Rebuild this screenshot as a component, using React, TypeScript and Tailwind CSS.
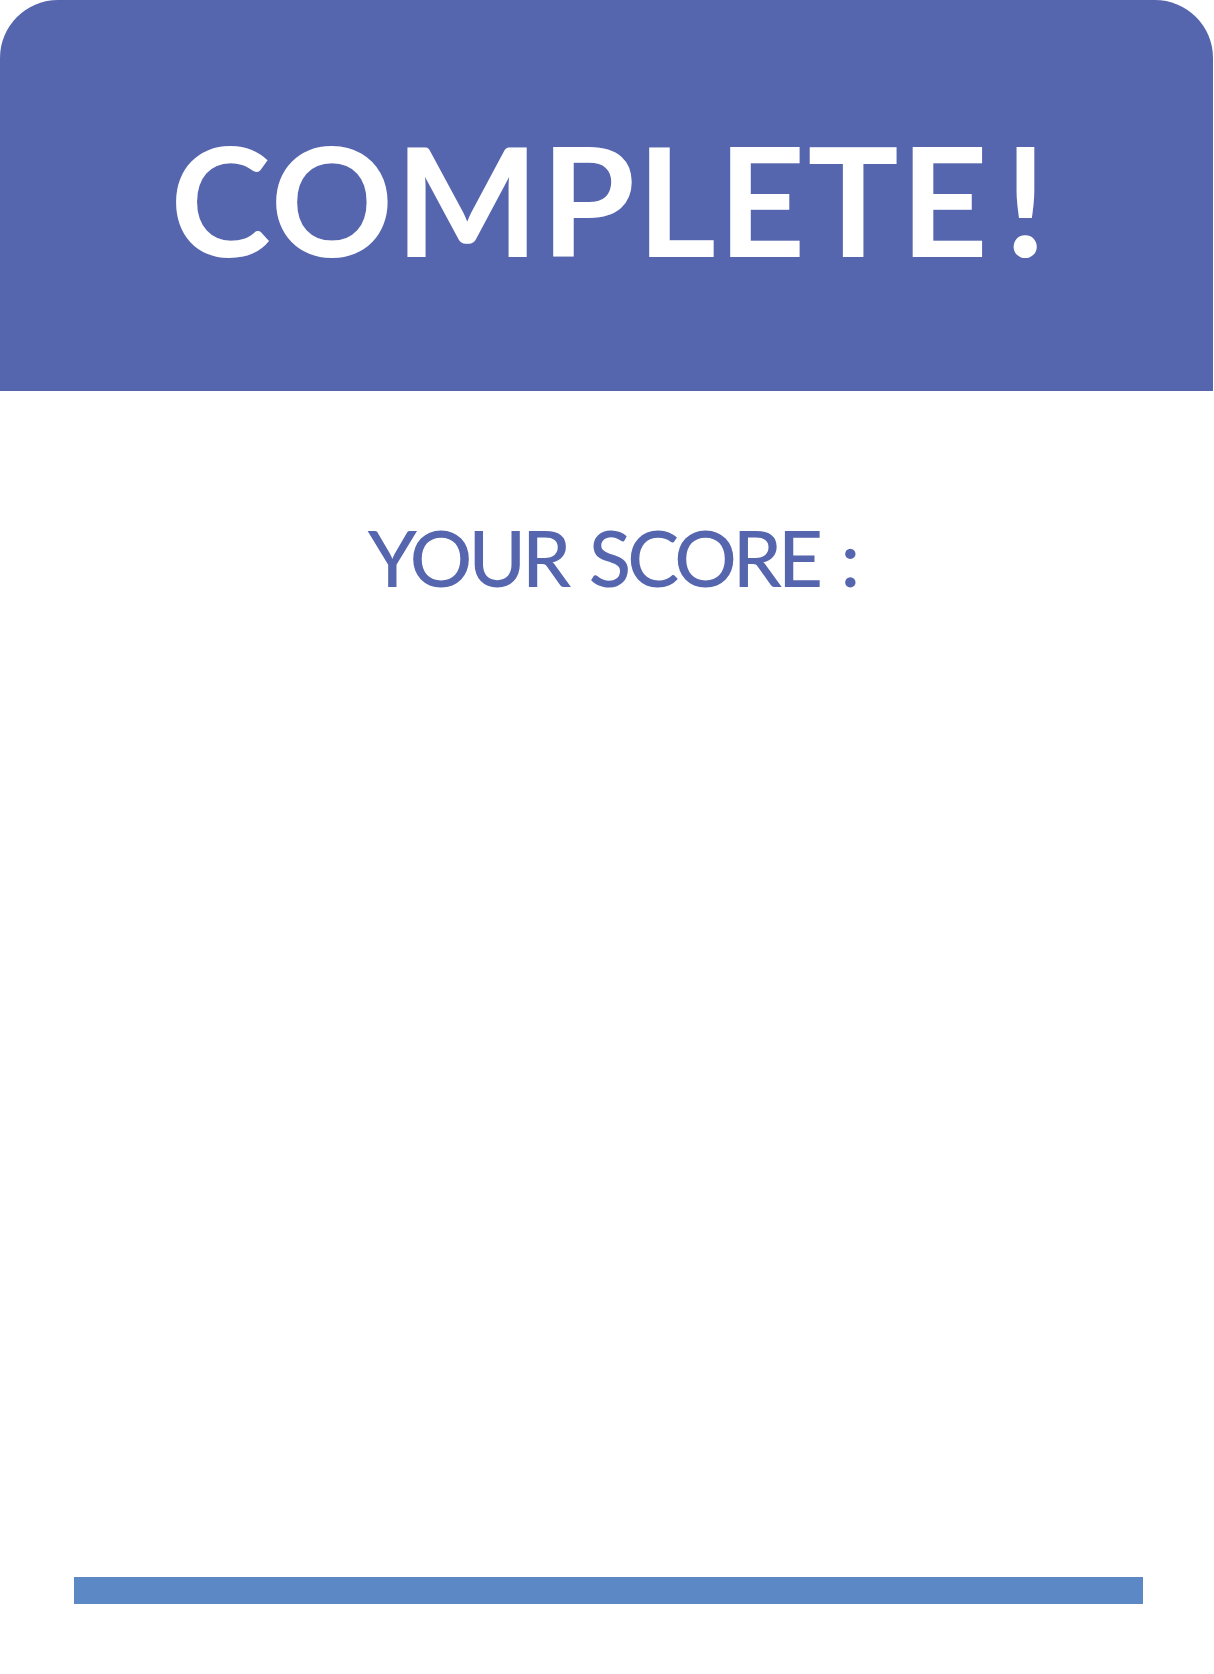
export default function App() {
  return (
    <div className="flex h-[1674px] w-[1214px] flex-col bg-white font-['Lato','Noto_Sans',sans-serif]">
      <div className="h-[391px] w-[1213px] rounded-t-[58px] bg-[#5666ae] pt-[122px] text-center">
        <h1 className="pl-[6px] text-[152px] font-bold leading-none tracking-[2px] text-white">
          COMPLETE<span className="ml-[14px]">!</span>
        </h1>
      </div>

      <p className="mt-[127px] pl-[10px] text-center text-[78px] font-medium leading-none tracking-[-4px] text-[#5666ae] [word-spacing:6px]">
        YOUR SCORE :
      </p>

      <div className="mb-[70px] ml-[74px] mt-auto h-[27px] w-[1069px] bg-[#5c88c6]" />
    </div>
  );
}
